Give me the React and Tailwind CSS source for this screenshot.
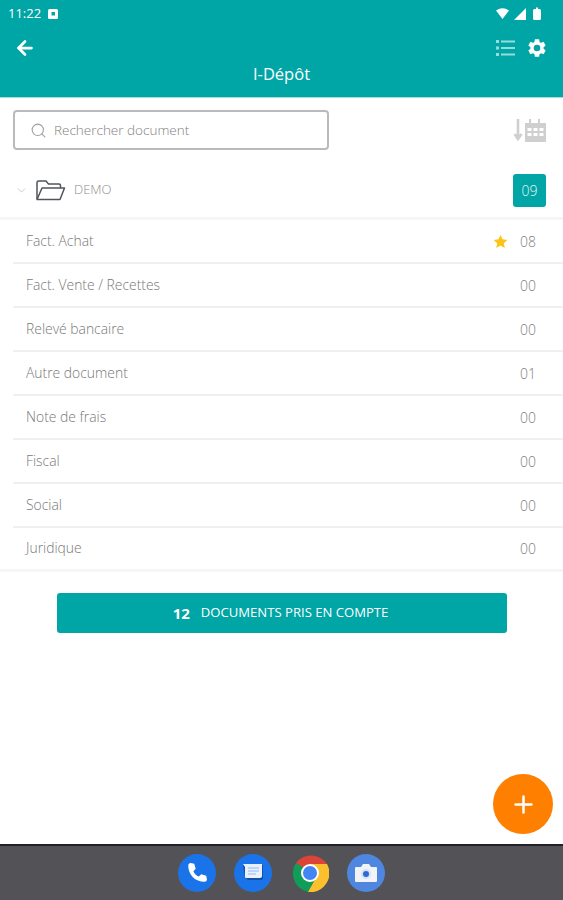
import { ArrowLeft, ChevronDown, Search, Plus } from 'lucide-react'

const ROWS = [
  { label: 'Fact. Achat', count: '08', star: true },
  { label: 'Fact. Vente / Recettes', count: '00' },
  { label: 'Relevé bancaire', count: '00' },
  { label: 'Autre document', count: '01' },
  { label: 'Note de frais', count: '00' },
  { label: 'Fiscal', count: '00' },
  { label: 'Social', count: '00' },
  { label: 'Juridique', count: '00', last: true },
]

function StatusBar() {
  return (
    <div className="flex h-[26px] items-center justify-between pl-[8px] pr-[22px] pt-[1px] text-white">
      <div className="flex items-center gap-[7px]">
        <span className="text-[13px] font-medium leading-none">11:22</span>
        <svg width="10" height="10" viewBox="0 0 10 10">
          <rect width="10" height="10" rx="1.5" fill="#fff" />
          <rect x="3.5" y="3" width="3.5" height="3.5" fill="#00a5a5" />
        </svg>
      </div>
      <div className="flex items-center gap-[5px]">
        <svg width="13" height="11" viewBox="0 0 13 11">
          <path d="M0 2.5Q6.5-2 13 2.5L6.5 11Z" fill="#fff" />
        </svg>
        <svg width="12" height="12" viewBox="0 0 12 12">
          <path d="M12 0V12H0Z" fill="#fff" />
        </svg>
        <svg width="8" height="13" viewBox="0 0 8 13" className="ml-[2px]">
          <path d="M1.5 2H3V.5H5V2H6.5Q8 2 8 3.5V11.5Q8 13 6.5 13H1.5Q0 13 0 11.5V3.5Q0 2 1.5 2Z" fill="#fff" />
        </svg>
      </div>
    </div>
  )
}

function Header() {
  return (
    <header className="h-[72px] border-b border-[#a9dcdc] bg-[#00a5a5] text-white">
      <div className="flex items-start justify-between pl-[14px] pr-[15px] pt-[11px]">
        <ArrowLeft size={22} strokeWidth={3} />
        <div className="flex items-center gap-[11px]">
          <svg width="19" height="18" viewBox="0 0 19 18" className="opacity-60">
            <g fill="#fff">
              <rect x="0" y="1" width="3" height="3" />
              <rect x="0" y="7.5" width="3" height="3" />
              <rect x="0" y="14" width="3" height="3" />
              <rect x="5" y="1.5" width="14" height="2" />
              <rect x="5" y="8" width="14" height="2" />
              <rect x="5" y="14.5" width="14" height="2" />
            </g>
          </svg>
          <svg width="22" height="22" viewBox="0 0 24 24" fill="#fff">
            <path d="M19.14 12.94c.04-.3.06-.61.06-.94s-.02-.64-.07-.94l2.03-1.58a.49.49 0 0 0 .12-.61l-1.92-3.32a.49.49 0 0 0-.59-.22l-2.39.96a7 7 0 0 0-1.62-.94l-.36-2.54a.48.48 0 0 0-.48-.41h-3.84a.48.48 0 0 0-.47.41l-.36 2.54c-.59.24-1.13.57-1.62.94l-2.39-.96a.49.49 0 0 0-.59.22L2.73 8.87a.48.48 0 0 0 .12.61l2.03 1.58c-.05.3-.08.63-.08.94s.02.64.07.94l-2.03 1.58a.49.49 0 0 0-.12.61l1.92 3.32c.12.22.37.29.59.22l2.39-.96c.5.38 1.03.7 1.62.94l.36 2.54c.05.24.24.41.48.41h3.84c.24 0 .44-.17.47-.41l.36-2.54c.59-.24 1.13-.56 1.62-.94l2.39.96c.22.08.47 0 .59-.22l1.92-3.32a.48.48 0 0 0-.12-.61zM12 15.6A3.6 3.6 0 1 1 12 8.4a3.6 3.6 0 0 1 0 7.2z" />
          </svg>
        </div>
      </div>
      <div className="mt-[4px] text-center text-[16.5px] leading-[22px]">I-Dépôt</div>
    </header>
  )
}

function SearchRow() {
  return (
    <div className="flex items-center justify-between pl-[13px] pr-[17px] pt-[12px]">
      <div className="flex h-[40px] w-[316px] items-center gap-[7px] rounded-[4px] border-2 border-[#bababa] pl-[15px]">
        <Search size={17} strokeWidth={1.5} className="text-[#a0a0a0]" />
        <span className="text-[13.5px] font-light text-[#808080]">Rechercher document</span>
      </div>
      <svg width="32" height="24" viewBox="0 0 32 24">
        <path d="M4 1V21M0.5 16L4 21L7.500 16" stroke="#cfcfcf" strokeWidth="2.600" fill="none" />
        <path d="M11 5H15V1H17V5H24V1H26V5H32V24H11Z" fill="#cfcfcf" />
        <g fill="#fff">
          <rect x="13.500" y="10" width="4" height="3" />
          <rect x="19.500" y="10" width="4" height="3" />
          <rect x="25.500" y="10" width="4" height="3" />
          <rect x="13.500" y="15" width="4" height="3" />
          <rect x="19.500" y="15" width="4" height="3" />
          <rect x="25.500" y="15" width="4" height="3" />
        </g>
      </svg>
    </div>
  )
}

function FolderRow() {
  return (
    <div className="flex h-[70px] items-center border-b-[3px] border-[#f6f6f6] pt-[13px] pl-[15px] pr-[17px]">
      <ChevronDown size={13} strokeWidth={1.25} className="text-[#b0b0b0]" />
      <svg width="31" height="21" viewBox="0 0 31 21" className="ml-[7px]" fill="none" stroke="#50545a" strokeWidth="1.500">
        <path d="M2 19V2.500Q2 1 3.500 1H11L13.500 4H24Q25.500 4 25.500 5.500V8" />
        <path d="M2 19.500L7 8H29.500L25 19.500Z" strokeLinejoin="round" />
      </svg>
      <span className="ml-[8px] text-[13px] font-light text-[#8c8c8c]">DEMO</span>
      <div className="ml-auto flex h-[33px] w-[33px] items-center justify-center rounded-[3px] bg-[#00a5a5] text-[14px] font-light text-[#e0f5f5]">
        09
      </div>
    </div>
  )
}

function DocRow({ label, count, star, last }) {
  return (
    <div
      className={
        last
          ? 'flex h-[44px] items-center border-b-[3px] border-[#f6f6f6] pl-[26px] pr-[26px]'
          : 'ml-[13px] flex h-[44px] items-center border-b-2 border-[#f0f0f0] pl-[13px] pr-[26px]'
      }
    >
      <span className="text-[13.9px] font-light text-[#787878]">{label}</span>
      <div className="ml-auto flex items-center">
        {star && (
          <svg width="15" height="15" viewBox="0 0 24 24" fill="#fcc419" className="mr-[12px]">
            <path d="M12 1.500l3.300 7 7.700.9-5.700 5.200 1.500 7.600L12 18.400l-6.800 3.800 1.500-7.600L1 9.400l7.700-.9z" />
          </svg>
        )}
        <span className="w-[17px] text-[14px] font-light text-[#808080]">{count}</span>
      </div>
    </div>
  )
}

function Dock() {
  return (
    <div className="flex h-[56px] items-center justify-center gap-[18.500px] border-t-2 border-[#222226] bg-[#535257]">
      <div className="flex h-[38px] w-[38px] items-center justify-center rounded-full bg-[#1a73e8]">
        <svg width="28" height="28" viewBox="0 0 24 24" fill="#fff">
          <path d="M6.600 3.500l3 .6 1.300 4.300-2 2c.9 2.200 2.500 3.800 4.700 4.700l2-2 4.300 1.300.6 3c.1 1-.8 2.100-2 2.100C10.500 19.500 4.500 13.500 4.500 5.500c0-1.200 1.100-2.100 2.100-2z" />
        </svg>
      </div>
      <div className="flex h-[38px] w-[38px] items-center justify-center rounded-full bg-[#1a73e8]">
        <svg width="22" height="20" viewBox="0 0 22 20">
          <path d="M1 2H21V15Q21 17 19 17H6L3 14Z" fill="#174ea6" />
          <path d="M1 1H20V13Q20 15 18 15H4Q3 15 3 14V4Z" fill="#e8f0fe" />
          <path d="M6 5H17M6 8H17M6 11H14" stroke="#aecbfa" strokeWidth="1.500" />
        </svg>
      </div>
      <svg width="38" height="38" viewBox="0 0 38 38">
        <path d="M19 19L5 9A19 19 0 0 1 36 10Z" fill="#db4437" />
        <path d="M5 9A19 19 0 0 0 17 38L26 22Z" fill="#0f9d58" />
        <path d="M36 10A19 19 0 0 1 17 38L26 22L19 10Z" fill="#fbc02d" />
        <circle cx="19" cy="19" r="9" fill="#fff" />
        <circle cx="19" cy="19" r="7" fill="#4285f4" />
      </svg>
      <div className="flex h-[38px] w-[38px] items-center justify-center rounded-full bg-[#4f86e0]">
        <svg width="24" height="20" viewBox="0 0 24 20">
          <path d="M2 4H7L9 1H15L17 4H22Q23 4 23 5V18Q23 19 22 19H2Q1 19 1 18V5Q1 4 2 4Z" fill="#f1f3f4" />
          <circle cx="12" cy="11" r="5" fill="#d2e3fc" />
          <circle cx="12" cy="11" r="3" fill="#2f6bd0" />
        </svg>
      </div>
    </div>
  )
}

export default function App() {
  return (
    <div className="flex h-[900px] flex-col bg-white font-['Open_Sans',sans-serif]">
      <div className="bg-[#00a5a5]">
        <StatusBar />
      </div>
      <Header />
      <main className="relative flex-1">
        <SearchRow />
        <FolderRow />
        {ROWS.map((r) => (
          <DocRow key={r.label} {...r} />
        ))}
        <div className="flex justify-center pt-[21px]">
          <div className="flex h-[40px] w-[450px] items-center justify-center gap-[11px] rounded-[3px] bg-[#00a5a5] pr-[2px] text-white">
            <span className="text-[15px] font-bold">12</span>
            <span className="text-[13.100px] font-medium">DOCUMENTS PRIS EN COMPTE</span>
          </div>
        </div>
        <button className="absolute bottom-[10px] right-[10px] flex h-[60px] w-[60px] items-center justify-center rounded-full bg-[#ff7f00] text-white">
          <Plus size={27} strokeWidth={2.250} />
        </button>
      </main>
      <Dock />
    </div>
  )
}
